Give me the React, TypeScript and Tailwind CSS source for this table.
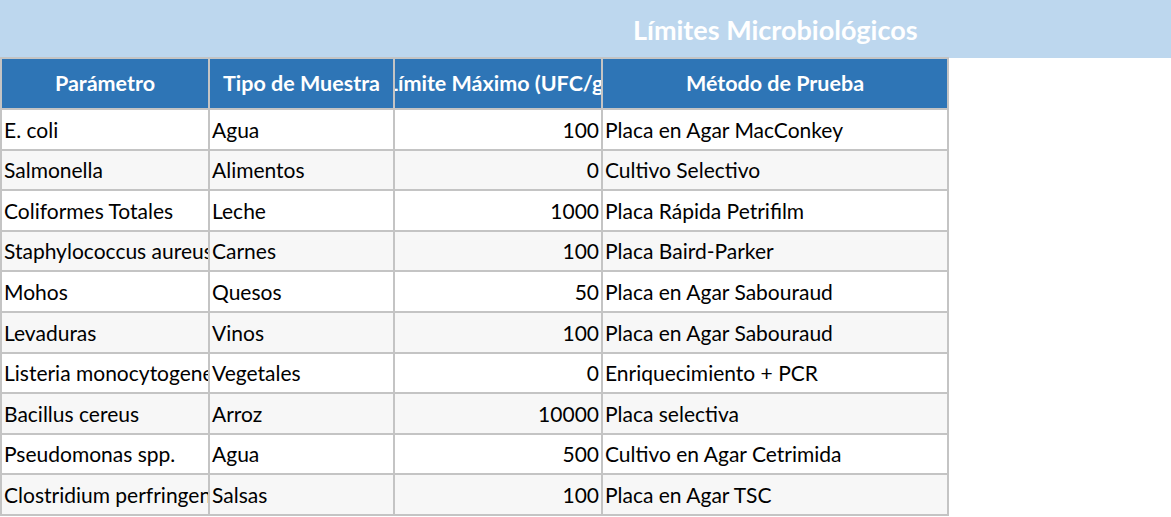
const rows: [string, string, string, string][] = [
  ["E. coli", "Agua", "100", "Placa en Agar MacConkey"],
  ["Salmonella", "Alimentos", "0", "Cultivo Selectivo"],
  ["Coliformes Totales", "Leche", "1000", "Placa Rápida Petrifilm"],
  ["Staphylococcus aureus", "Carnes", "100", "Placa Baird-Parker"],
  ["Mohos", "Quesos", "50", "Placa en Agar Sabouraud"],
  ["Levaduras", "Vinos", "100", "Placa en Agar Sabouraud"],
  ["Listeria monocytogenes", "Vegetales", "0", "Enriquecimiento + PCR"],
  ["Bacillus cereus", "Arroz", "10000", "Placa selectiva"],
  ["Pseudomonas spp.", "Agua", "500", "Cultivo en Agar Cetrimida"],
  ["Clostridium perfringens", "Salsas", "100", "Placa en Agar TSC"],
];

const headers = ["Parámetro", "Tipo de Muestra", "Límite Máximo (UFC/g)", "Método de Prueba"];

export default function App() {
  return (
    <div
      className="w-[1171px] h-[517px] bg-white overflow-hidden"
      style={{ fontFamily: "Lato, 'Open Sans', sans-serif" }}
    >
      {/* merged title cell */}
      <div className="h-[58px] bg-[#bdd7ee] flex items-center pl-[633px]">
        <span className="text-[27px] font-bold text-white leading-none">Límites Microbiológicos</span>
      </div>

      <div className="w-[949px] -mt-px grid grid-cols-[206px_183px_206px_344px] gap-[2px] p-[2px] bg-[#c4c4c4]">
        {headers.map((h) => (
          <div
            key={h}
            className="h-[49px] bg-[#2e75b6] flex items-center justify-center overflow-hidden whitespace-nowrap text-[21.5px] font-bold text-white"
          >
            {h}
          </div>
        ))}
        {rows.map((r, i) => {
          const bg = i % 2 === 0 ? "bg-white" : "bg-[#f7f7f7]";
          return r.map((c, j) => (
            <div
              key={`${i}-${j}`}
              className={`h-[38.6px] ${bg} flex items-center overflow-hidden whitespace-nowrap text-[21px] text-black px-[2px] ${
                j === 2 ? "justify-end" : ""
              }`}
            >
              {c}
            </div>
          ));
        })}
      </div>
    </div>
  );
}
